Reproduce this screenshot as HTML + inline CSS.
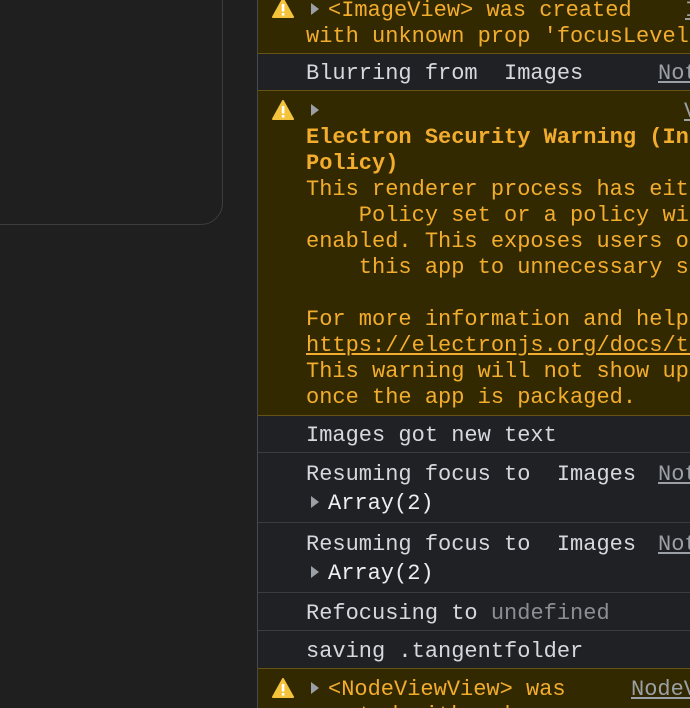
<!DOCTYPE html>
<html><head><style>
*{margin:0;padding:0;box-sizing:border-box}
body{width:690px;height:708px;overflow:hidden;background:#1f1f1f;position:relative;font-family:"Liberation Mono","DejaVu Sans Mono",monospace;font-size:22px;}
.box{position:absolute;left:-30px;top:-30px;width:253px;height:255px;border:1.5px solid #3d3d3d;border-radius:22px;}
.vl{position:absolute;left:257px;top:0;width:1px;height:708px;background:#4a4a4a}
.con{position:absolute;left:258px;top:0;width:432px;height:708px;background:#202124;overflow:hidden}
.row{position:absolute;left:0;width:432px;overflow:hidden}
.w{background:#332900;color:#f3ad2e;border-bottom:1px solid #665310}
.n{color:#d5d8dd;border-bottom:1px solid #3b3c40}
.t{position:absolute;left:48px;white-space:pre;line-height:26px}
.l{position:absolute;white-space:pre;color:#9aa0a6;text-decoration:underline;line-height:26px}
.ic{position:absolute;left:14px;width:22px;height:20px}
.tri{display:inline-block;width:0;height:0;border-top:6px solid transparent;border-bottom:6px solid transparent;border-left:8px solid #9aa0a6;margin-left:5px;margin-right:9px;position:relative;top:-1px}
.arr{color:#eceef1}
b{font-weight:bold}
</style></head><body>
<div class="box"></div>
<div class="vl"></div>
<div class="con">
<svg width="0" height="0" style="position:absolute"><defs><g id="wi"><path d="M11 1 L21 19 L1 19 Z" fill="#f5c33b" stroke="#f5c33b" stroke-width="2" stroke-linejoin="round"/><rect x="9.8" y="6" width="2.6" height="7.5" fill="#fff"/><rect x="9.8" y="15" width="2.6" height="2.6" fill="#fff"/></g></defs></svg>

<div class="row w" style="top:-10px;height:64px">
<svg class="ic" style="top:8px" viewBox="0 0 22 20"><use href="#wi"/></svg>
<div class="t" style="top:8px"><span class="tri"></span>&lt;ImageView&gt; was created</div>
<div class="l" style="left:427px;top:8px">I</div>
<div class="t" style="top:34px">with unknown prop 'focusLevel'</div>
</div>

<div class="row n" style="top:54px;height:37px;border-bottom:1px solid #665310">
<div class="t" style="top:7px">Blurring from  Images</div>
<div class="l" style="left:400px;top:7px">Not</div>
</div>

<div class="row w" style="top:91px;height:325px">
<svg class="ic" style="top:9px" viewBox="0 0 22 20"><use href="#wi"/></svg>
<div class="t" style="top:8px"><span class="tri"></span></div>
<div class="l" style="left:426px;top:8px">V</div>
<div class="t" style="top:34px"><b>Electron Security Warning (Insecure Content-Security-
Policy)</b>
This renderer process has either no Content Security
    Policy set or a policy with "unsafe-eval"
enabled. This exposes users of
    this app to unnecessary security risks.

For more information and help, consult
<u>https://electronjs.org/docs/tutorial/security</u>.
This warning will not show up
once the app is packaged.</div>
</div>

<div class="row n" style="top:416px;height:37px">
<div class="t" style="top:7px">Images got new text</div>
</div>

<div class="row n" style="top:453px;height:70px">
<div class="t" style="top:9px">Resuming focus to  Images</div>
<div class="l" style="left:400px;top:9px">Not</div>
<div class="t arr" style="top:38px"><span class="tri"></span>Array(2)</div>
</div>

<div class="row n" style="top:523px;height:70px">
<div class="t" style="top:9px">Resuming focus to  Images</div>
<div class="l" style="left:400px;top:9px">Not</div>
<div class="t arr" style="top:38px"><span class="tri"></span>Array(2)</div>
</div>

<div class="row n" style="top:593px;height:38px">
<div class="t" style="top:8px">Refocusing to <span style="color:#8b8e93">undefined</span></div>
</div>

<div class="row n" style="top:631px;height:38px;border-bottom:1px solid #665310">
<div class="t" style="top:8px">saving .tangentfolder</div>
</div>

<div class="row w" style="top:669px;height:60px;border-top:none">
<svg class="ic" style="top:9px" viewBox="0 0 22 20"><use href="#wi"/></svg>
<div class="t" style="top:8px"><span class="tri"></span>&lt;NodeViewView&gt; was</div>
<div class="l" style="left:373px;top:8px">NodeV</div>
<div class="t" style="top:34px">created with unknown prop</div>
</div>
</div>
</body></html>
